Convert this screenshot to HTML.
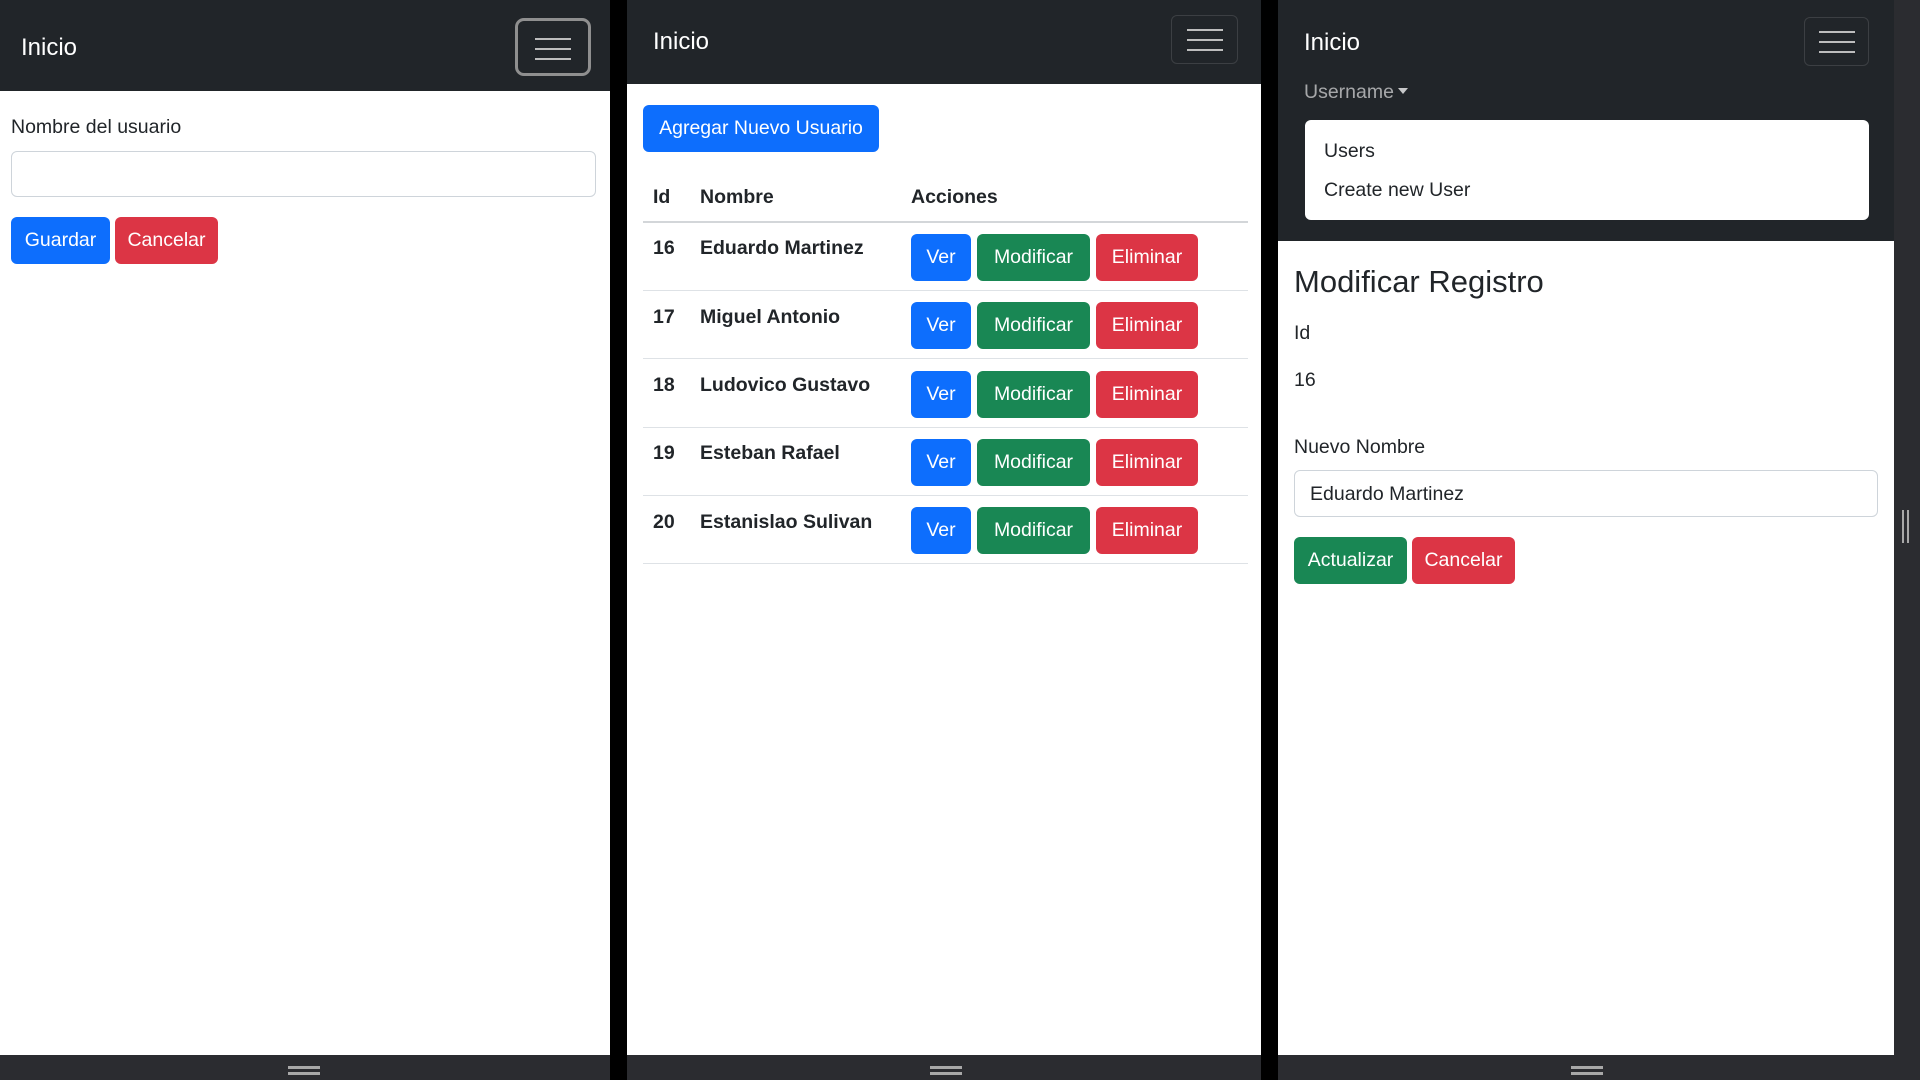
<!DOCTYPE html>
<html><head><meta charset="utf-8"><style>
*{box-sizing:border-box;margin:0;padding:0}
body{width:1920px;height:1080px;background:#000;position:relative;overflow:hidden;font-family:"Liberation Sans",sans-serif;color:#212529;font-size:19.5px}
.a{position:absolute}
.panel{position:absolute;top:0;height:1055px;background:#fff;overflow:hidden}
.nav{position:absolute;left:0;top:0;right:0;background:#212529}
.brand{position:absolute;color:#fff;font-size:24px;line-height:1}
.tog{position:absolute;border:1px solid rgba(255,255,255,.12);border-radius:6px}
.tog i{position:absolute;left:50%;width:36px;margin-left:-18px;height:2px;background:#bdbdbd}
.btn{position:absolute;color:#fff;border-radius:6px;display:flex;align-items:center;justify-content:center;font-size:19.5px}
.pb{background:#0d6efd}.sb{background:#198754}.db{background:#dc3545}
.inp{position:absolute;border:1px solid #ced4da;border-radius:6px;background:#fff}
.bb{position:absolute;top:1055px;height:25px;background:#2b2c30}
.hd{position:absolute;width:32px;height:3px;background:#a8a8a8}
.row{position:absolute;left:643px;width:605px;height:1px;background:#dee2e6}
.tx{position:absolute;font-weight:bold;font-size:19.5px;line-height:1}
</style></head><body>

<!-- panel 1 -->
<div class="panel" style="left:0;width:610px">
 <div class="nav" style="height:91px"></div>
 <div class="brand" style="left:21px;top:36px">Inicio</div>
 <div class="tog" style="left:515px;top:18px;width:76px;height:58px;border:3px solid #8f8f8f;border-radius:9px">
  <i style="top:17px"></i><i style="top:27px"></i><i style="top:37px"></i>
 </div>
 <div class="a" style="left:11px;top:116px">Nombre del usuario</div>
 <div class="inp" style="left:11px;top:151px;width:585px;height:46px"></div>
 <div class="btn pb" style="left:11px;top:217px;width:99px;height:47px">Guardar</div>
 <div class="btn db" style="left:115px;top:217px;width:103px;height:47px">Cancelar</div>
</div>
<div class="bb" style="left:0;width:610px"><div class="hd" style="left:288px;top:11px"></div><div class="hd" style="left:288px;top:17px"></div></div>

<!-- panel 2 -->
<div class="panel" style="left:627px;width:634px">
 <div class="nav" style="height:84px"></div>
 <div class="brand" style="left:26px;top:30px">Inicio</div>
 <div class="tog" style="left:544px;top:15px;width:67px;height:49px">
  <i style="top:13px"></i><i style="top:23px"></i><i style="top:33px"></i>
 </div>
</div>
<div class="btn pb" style="left:643px;top:105px;width:236px;height:47px">Agregar Nuevo Usuario</div>
<div class="tx" style="left:653px;top:188px">Id</div>
<div class="tx" style="left:700px;top:188px">Nombre</div>
<div class="tx" style="left:911px;top:188px">Acciones</div>
<div class="row" style="top:221px;height:2px;background:#d3d6d9"></div>

<div class="tx" style="left:653px;top:239px">16</div><div class="tx" style="left:700px;top:239px">Eduardo Martinez</div>
<div class="btn pb" style="left:911px;top:234px;width:60px;height:47px">Ver</div><div class="btn sb" style="left:977px;top:234px;width:113px;height:47px">Modificar</div><div class="btn db" style="left:1096px;top:234px;width:102px;height:47px">Eliminar</div>
<div class="row" style="top:290px"></div>

<div class="tx" style="left:653px;top:308px">17</div><div class="tx" style="left:700px;top:308px">Miguel Antonio</div>
<div class="btn pb" style="left:911px;top:302px;width:60px;height:47px">Ver</div><div class="btn sb" style="left:977px;top:302px;width:113px;height:47px">Modificar</div><div class="btn db" style="left:1096px;top:302px;width:102px;height:47px">Eliminar</div>
<div class="row" style="top:358px"></div>

<div class="tx" style="left:653px;top:376px">18</div><div class="tx" style="left:700px;top:376px">Ludovico Gustavo</div>
<div class="btn pb" style="left:911px;top:371px;width:60px;height:47px">Ver</div><div class="btn sb" style="left:977px;top:371px;width:113px;height:47px">Modificar</div><div class="btn db" style="left:1096px;top:371px;width:102px;height:47px">Eliminar</div>
<div class="row" style="top:427px"></div>

<div class="tx" style="left:653px;top:444px">19</div><div class="tx" style="left:700px;top:444px">Esteban Rafael</div>
<div class="btn pb" style="left:911px;top:439px;width:60px;height:47px">Ver</div><div class="btn sb" style="left:977px;top:439px;width:113px;height:47px">Modificar</div><div class="btn db" style="left:1096px;top:439px;width:102px;height:47px">Eliminar</div>
<div class="row" style="top:495px"></div>

<div class="tx" style="left:653px;top:513px">20</div><div class="tx" style="left:700px;top:513px">Estanislao Sulivan</div>
<div class="btn pb" style="left:911px;top:507px;width:60px;height:47px">Ver</div><div class="btn sb" style="left:977px;top:507px;width:113px;height:47px">Modificar</div><div class="btn db" style="left:1096px;top:507px;width:102px;height:47px">Eliminar</div>
<div class="row" style="top:563px"></div>
<div class="bb" style="left:627px;width:634px"><div class="hd" style="left:303px;top:11px"></div><div class="hd" style="left:303px;top:17px"></div></div>

<!-- panel 3 -->
<div class="panel" style="left:1278px;width:616px">
 <div class="nav" style="height:241px"></div>
 <div class="brand" style="left:26px;top:31px">Inicio</div>
 <div class="tog" style="left:526px;top:17px;width:65px;height:49px">
  <i style="top:13px"></i><i style="top:23px"></i><i style="top:33px"></i>
 </div>
 <div class="a" style="left:26px;top:81px;color:rgba(255,255,255,.6);font-size:19.5px">Username</div>
 <div class="a" style="left:120px;top:88px;width:0;height:0;border-left:5px solid transparent;border-right:5px solid transparent;border-top:6px solid rgba(255,255,255,.75)"></div>
 <div class="a" style="left:27px;top:120px;width:564px;height:100px;background:#fff;border-radius:6px"></div>
 <div class="a" style="left:46px;top:140px">Users</div>
 <div class="a" style="left:46px;top:179px">Create new User</div>
 <div class="a" style="left:16px;top:264px;font-size:31px">Modificar Registro</div>
 <div class="a" style="left:16px;top:322px">Id</div>
 <div class="a" style="left:16px;top:369px">16</div>
 <div class="a" style="left:16px;top:436px">Nuevo Nombre</div>
 <div class="inp" style="left:16px;top:470px;width:584px;height:47px;padding:12px 15px">Eduardo Martinez</div>
 <div class="btn sb" style="left:16px;top:537px;width:113px;height:47px">Actualizar</div>
 <div class="btn db" style="left:134px;top:537px;width:103px;height:47px">Cancelar</div>
</div>
<div class="bb" style="left:1278px;width:642px"><div class="hd" style="left:293px;top:11px"></div><div class="hd" style="left:293px;top:17px"></div></div>
<div class="a" style="left:1894px;top:0;width:26px;height:1080px;background:#2b2c30"></div>
<div class="a" style="left:1902px;top:510px;width:2px;height:33px;background:#a8a8a8"></div>
<div class="a" style="left:1907px;top:510px;width:2px;height:33px;background:#a8a8a8"></div>
</body></html>
